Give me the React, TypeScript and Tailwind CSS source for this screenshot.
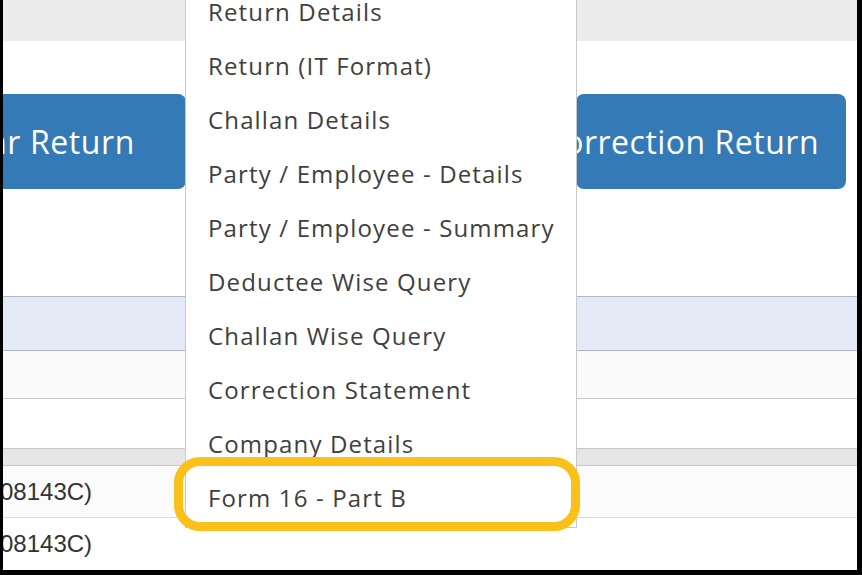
import React from "react";

const menuItems = [
  "Return Details",
  "Return (IT Format)",
  "Challan Details",
  "Party / Employee - Details",
  "Party / Employee - Summary",
  "Deductee Wise Query",
  "Challan Wise Query",
  "Correction Statement",
  "Company Details",
  "Form 16 - Part B",
];

export default function App() {
  return (
    <div className="w-[862px] h-[575px] bg-black pl-[3px] pr-[5px] pb-[5px] overflow-hidden">
      <div className="relative w-full h-full bg-white overflow-hidden font-['Liberation_Sans',sans-serif]">
        {/* top bar */}
        <div className="h-[41px] bg-[#ececec]" />
        <div className="h-[53px]" />

        {/* action buttons */}
        <div className="flex h-[95px] justify-between pr-[11px]">
          <button className="w-[186px] ml-[-3px] h-full bg-[#337ab7] rounded-r-lg text-white text-[32px] tracking-[0.6px] font-['Open_Sans',sans-serif] flex items-center justify-end pr-[51px] whitespace-nowrap overflow-hidden">
            ar Return
          </button>
          <button className="w-[270px] h-full bg-[#337ab7] rounded-lg text-white text-[32px] tracking-[0.5px] font-['Open_Sans',sans-serif] flex items-center justify-end pr-[27px] whitespace-nowrap">
            Correction Return
          </button>
        </div>
        <div className="h-[107px]" />

        {/* table */}
        <div className="h-[55px] border-y border-[#aebacb] bg-[#e4ebf6]" />
        <div className="h-[48px] border-b border-[#c8c8c8] bg-[#fafafa]" />
        <div className="h-[49px] bg-white" />
        <div className="h-[18px] border-y border-[#c8c8c8] bg-[#e6e6e6]" />
        <div className="h-[52px] border-b border-[#dddddd] bg-[#fbfbfb] flex items-center">
          <span className="ml-[-3px] text-[24px] text-[#333]">08143C)</span>
        </div>
        <div className="h-[52px] flex items-center">
          <span className="ml-[-3px] text-[24px] text-[#333]">08143C)</span>
        </div>

        {/* dropdown menu */}
        <div className="absolute left-[182px] top-[-15px] w-[392px] bg-white border-x border-b border-[#c9c9c9] pb-[2px] font-['Open_Sans',sans-serif]">
          {menuItems.map((item) => (
            <div
              key={item}
              className="h-[54px] flex items-center pl-[22px] text-[24px] tracking-[1.15px] text-[#404040] whitespace-nowrap"
            >
              {item}
            </div>
          ))}
        </div>

        {/* highlight */}
        <div className="absolute left-[171px] top-[457px] w-[406px] h-[74px] border-[9px] border-[#fbc11a] rounded-[26px]" />
      </div>
    </div>
  );
}
